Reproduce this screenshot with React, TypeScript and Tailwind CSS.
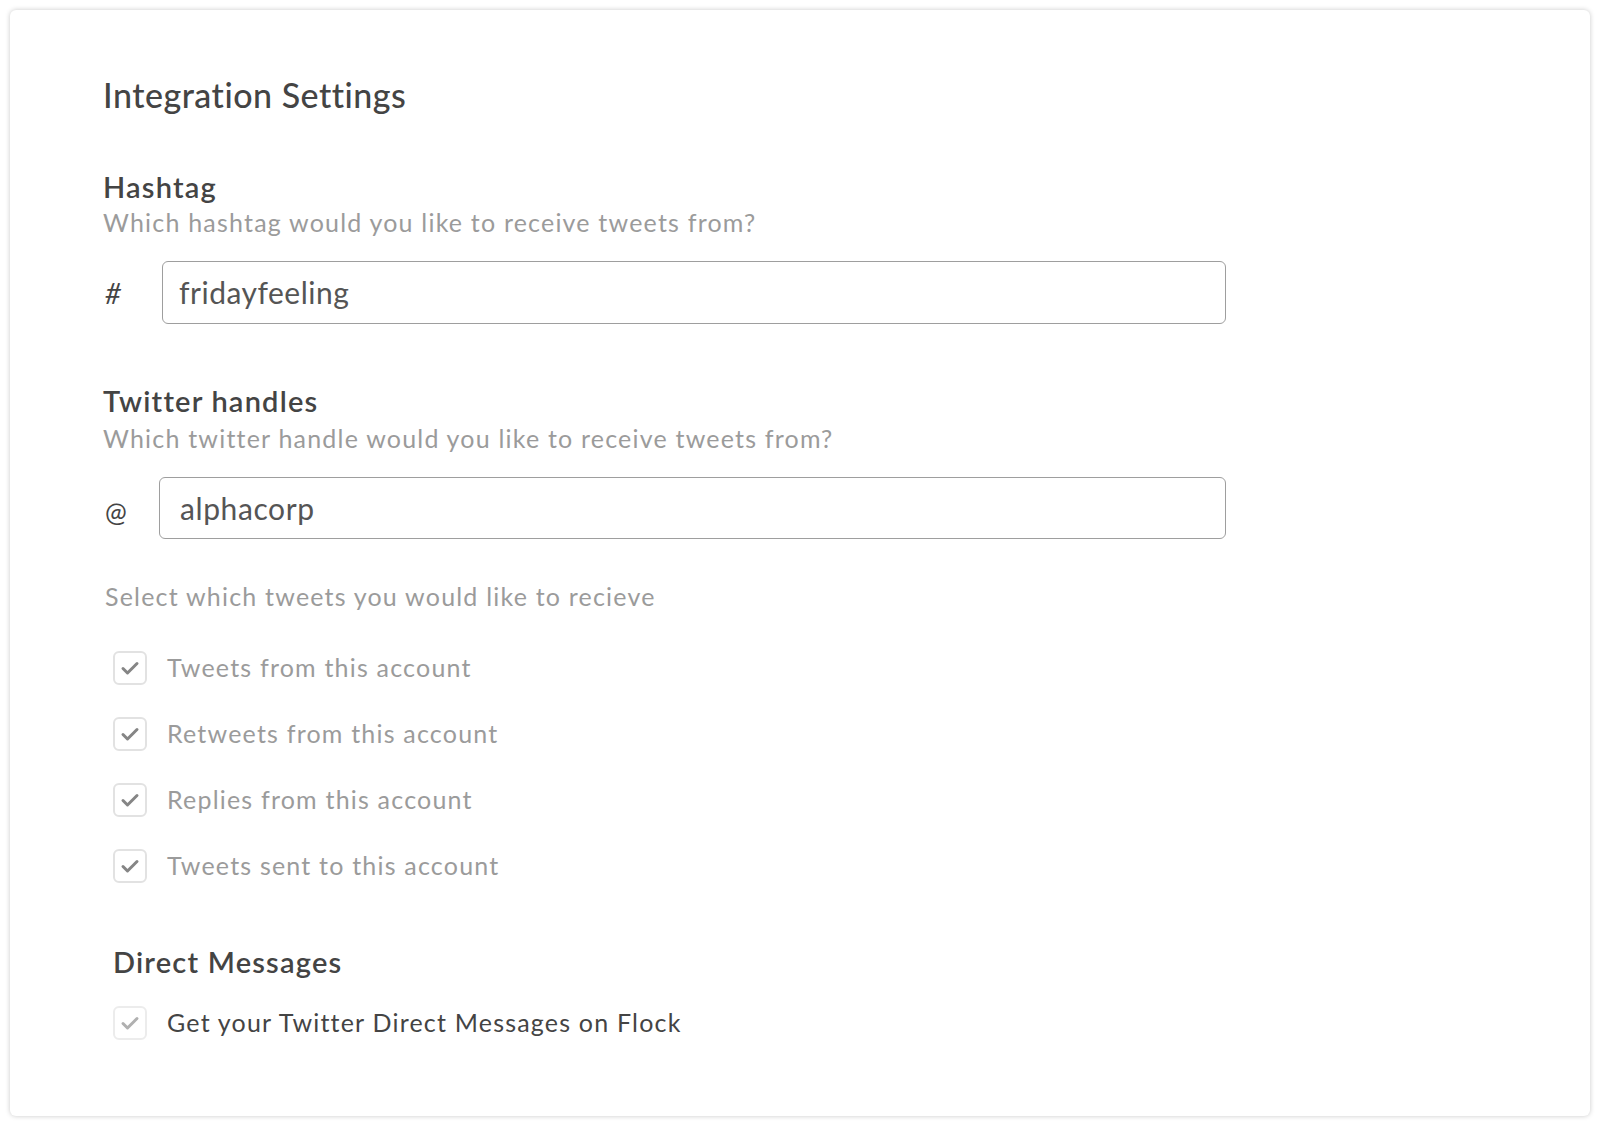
import React from "react";

const font = { fontFamily: "Lato, 'Open Sans', sans-serif", fontVariantLigatures: "none" as const };

function Check({ light }: { light?: boolean }) {
  return (
    <span
      className={
        "flex h-[34px] w-[34px] shrink-0 items-center justify-center rounded-[6px] border-2 bg-white " +
        (light ? "border-[#ececec]" : "border-[#e2e2e2]")
      }
    >
      <svg width="22" height="18" viewBox="0 0 22 18" fill="none">
        <path
          d="M4 9.5 L8.5 14 L18 4.5"
          stroke={light ? "#b0b0b0" : "#858585"}
          strokeWidth="3"
          strokeLinecap="round"
          strokeLinejoin="round"
        />
      </svg>
    </span>
  );
}

const tweetOptions = [
  "Tweets from this account",
  "Retweets from this account",
  "Replies from this account",
  "Tweets sent to this account",
];

export default function App() {
  return (
    <div className="w-[1600px] h-[1126px] bg-white p-[10px]" style={font}>
      <div className="h-full w-full rounded-[6px] bg-white shadow-[0_0_5px_rgba(0,0,0,0.22)] pl-[93px] pt-[65px]">
        <h1 className="text-[34px] leading-[40px] font-medium tracking-[0.5px] text-[#444]">Integration Settings</h1>

        <h2 className="mt-[56px] text-[29px] leading-[32px] font-semibold tracking-[1.2px] text-[#444]">Hashtag</h2>
        <p className="mt-[4px] text-[25px] leading-[30px] text-[#9b9b9b] tracking-[1.2px]">
          Which hashtag would you like to receive tweets from?
        </p>
        <div className="mt-[24px] flex items-center">
          <span className="w-[59px] pl-[2px] text-[28px] italic text-[#444]">#</span>
          <div className="flex h-[63px] w-[1064px] items-center rounded-[6px] border-[1.5px] border-[#9e9e9e] pl-[16px] text-[30px] tracking-[0.5px] text-[#555]">
            fridayfeeling
          </div>
        </div>

        <h2 className="mt-[61px] text-[29px] leading-[32px] font-semibold tracking-[1.2px] text-[#444]">Twitter handles</h2>
        <p className="mt-[6px] text-[25px] leading-[30px] text-[#9b9b9b] tracking-[1.2px]">
          Which twitter handle would you like to receive tweets from?
        </p>
        <div className="mt-[24px] flex items-center">
          <span className="w-[56px] pl-[2px] pt-[8px] text-[26px] text-[#444]">@</span>
          <div className="flex h-[62px] w-[1067px] items-center rounded-[6px] border-[1.5px] border-[#9e9e9e] pl-[20px] text-[30px] tracking-[0.6px] text-[#555]">
            alphacorp
          </div>
        </div>

        <p className="mt-[42px] pl-[2px] text-[25px] leading-[30px] text-[#9b9b9b] tracking-[1.2px]">
          Select which tweets you would like to recieve
        </p>
        <div className="mt-[40px] flex flex-col gap-[32px] pl-[10px]">
          {tweetOptions.map((t) => (
            <label key={t} className="flex h-[34px] items-center gap-[20px]">
              <Check />
              <span className="text-[25px] text-[#9b9b9b] tracking-[1.2px]">{t}</span>
            </label>
          ))}
        </div>

        <h2 className="mt-[63px] pl-[10px] text-[29px] leading-[32px] font-semibold tracking-[1.2px] text-[#444]">Direct Messages</h2>
        <label className="mt-[28px] flex h-[34px] items-center gap-[20px] pl-[10px]">
          <Check light />
          <span className="text-[25px] text-[#444] tracking-[1.2px]">Get your Twitter Direct Messages on Flock</span>
        </label>
      </div>
    </div>
  );
}
